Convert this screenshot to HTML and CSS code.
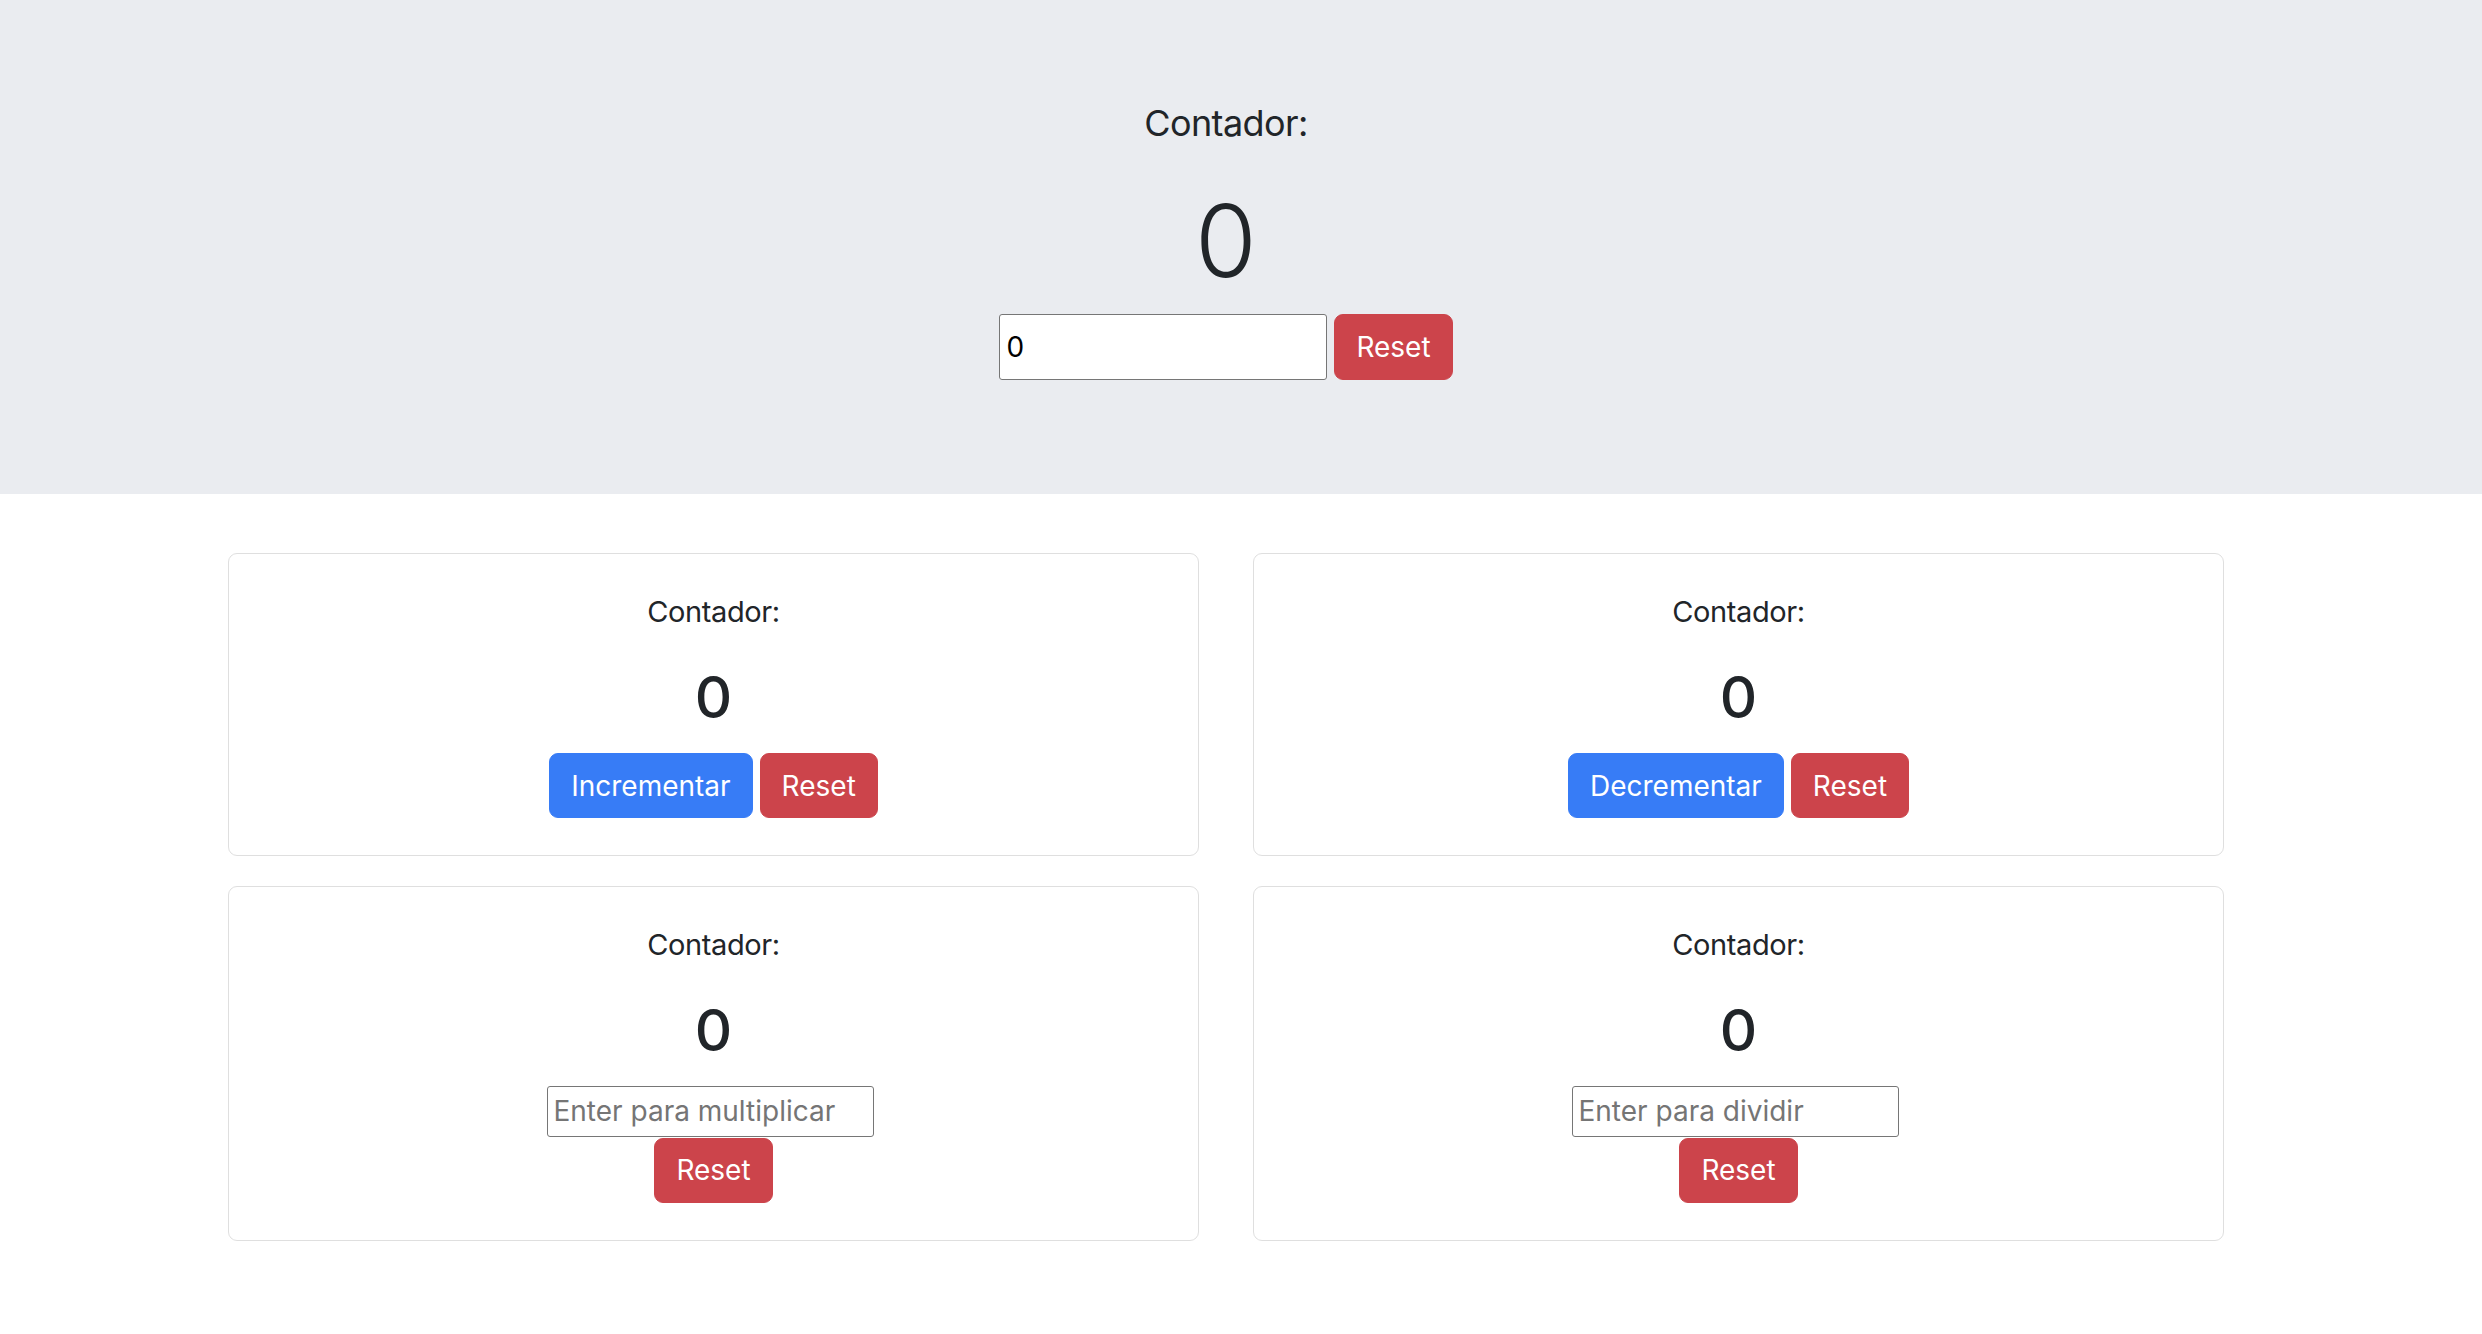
FILE: index.html
```html
<!DOCTYPE html>
<html lang="es">
<head>
<meta charset="utf-8">
<title>Contador</title>
<link rel="stylesheet" href="styles.css">
</head>
<body>
<header class="hero">
  <div class="wrap hero-inner">
    <h3 class="hero-title">Contador:</h3>
    <div class="hero-value">0</div>
    <div class="hero-controls">
      <input class="field field-lg" type="text" value="0">
      <button class="btn btn-danger" type="button">Reset</button>
    </div>
  </div>
</header>
<main class="wrap">
  <div class="grid">
    <section class="card">
      <h5 class="card-title">Contador:</h5>
      <div class="card-value">0</div>
      <div class="btn-row">
        <button class="btn btn-primary" type="button">Incrementar</button>
        <button class="btn btn-danger" type="button">Reset</button>
      </div>
    </section>
    <section class="card">
      <h5 class="card-title">Contador:</h5>
      <div class="card-value">0</div>
      <div class="btn-row">
        <button class="btn btn-primary" type="button">Decrementar</button>
        <button class="btn btn-danger" type="button">Reset</button>
      </div>
    </section>
    <section class="card">
      <h5 class="card-title">Contador:</h5>
      <div class="card-value">0</div>
      <div class="stack">
        <input class="field field-sm" type="text" placeholder="Enter para multiplicar">
        <button class="btn btn-danger" type="button">Reset</button>
      </div>
    </section>
    <section class="card">
      <h5 class="card-title">Contador:</h5>
      <div class="card-value">0</div>
      <div class="stack">
        <input class="field field-sm" type="text" placeholder="Enter para dividir">
        <button class="btn btn-danger" type="button">Reset</button>
      </div>
    </section>
  </div>
</main>
</body>
</html>
```

FILE: styles.css
```css
* { box-sizing: border-box; }

html, body {
  margin: 0;
  padding: 0;
  background: #ffffff;
}

body {
  font-family: Inter, "Noto Sans", "Liberation Sans", sans-serif;
  color: #212529;
}

.wrap {
  width: 2452px;
}

.hero {
  background: #eaecf0;
  height: 494px;
}

.hero-inner {
  display: flex;
  flex-direction: column;
  align-items: center;
  padding-top: 102px;
}

.hero-title {
  margin: 0;
  font-size: 36px;
  font-weight: 400;
  line-height: 1.2;
  letter-spacing: -0.6px;
}

.hero-value {
  margin-top: 36px;
  font-size: 100px;
  font-weight: 300;
  line-height: 1.2;
}

.hero-controls {
  margin-top: 13px;
  display: flex;
  gap: 7px;
}

.field {
  font-family: Inter, "Noto Sans", "Liberation Sans", sans-serif;
  font-size: 28px;
  color: #000000;
  background: #ffffff;
  border: 1px solid #767676;
  border-radius: 3px;
  padding: 0 6px;
  margin: 0;
  outline: none;
}

.field::placeholder {
  color: #757575;
}

.field-lg {
  width: 328px;
  height: 66px;
}

.field-sm {
  width: 327px;
  height: 51px;
  margin-right: 7px;
}

.btn {
  font-family: Inter, "Noto Sans", "Liberation Sans", sans-serif;
  font-size: 28px;
  font-weight: 400;
  line-height: 42px;
  padding: 10.5px 21px;
  border: 1px solid transparent;
  border-radius: 9px;
  color: #ffffff;
  margin: 0;
  cursor: pointer;
}

.btn-danger {
  background: #cc444b;
  border-color: #cc444b;
}

.btn-primary {
  background: #377cf6;
  border-color: #377cf6;
}

.grid {
  margin-top: 59px;
  margin-left: 228px;
  width: 1996px;
  display: grid;
  grid-template-columns: 1fr 1fr;
  column-gap: 54px;
  row-gap: 30px;
  align-items: start;
}

.card {
  border: 1px solid #dfdfdf;
  border-radius: 9px;
  padding: 41px 20px 37px;
  display: flex;
  flex-direction: column;
  align-items: center;
  background: #ffffff;
}

.card-title {
  margin: 0;
  font-size: 29px;
  font-weight: 400;
  line-height: 1.2;
  letter-spacing: -0.4px;
}

.card-value {
  margin-top: 33px;
  font-size: 58px;
  font-weight: 500;
  line-height: 1.2;
}

.btn-row {
  margin-top: 21px;
  display: flex;
  gap: 7px;
}

.stack {
  margin-top: 20px;
  display: flex;
  flex-direction: column;
  align-items: center;
}

.stack .btn {
  margin-top: 1px;
}
```
